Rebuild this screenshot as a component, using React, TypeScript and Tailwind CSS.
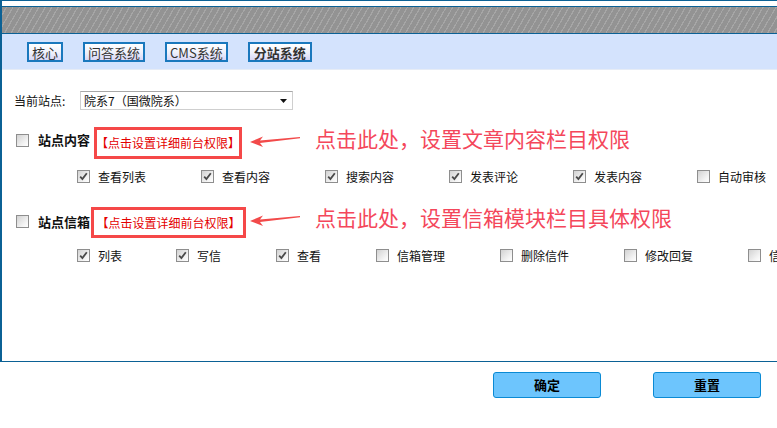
import React from "react"

/* fonts */
const cjk = "font-['Noto_Sans_CJK_SC','Noto_Sans',sans-serif]"

const tabs = [
  { label: "核心" },
  { label: "问答系统" },
  { label: "CMS系统" },
  { label: "分站系统", active: true },
]

const contentPerms = [
  { label: "查看列表", checked: true, w: "w-[124px]" },
  { label: "查看内容", checked: true, w: "w-[124px]" },
  { label: "搜索内容", checked: true, w: "w-[124px]" },
  { label: "发表评论", checked: true, w: "w-[124px]" },
  { label: "发表内容", checked: true, w: "w-[124px]" },
  { label: "自动审核", checked: false, w: "w-[124px]" },
]

const mailPerms = [
  { label: "列表", checked: true, w: "w-[99px]" },
  { label: "写信", checked: true, w: "w-[100px]" },
  { label: "查看", checked: true, w: "w-[100px]" },
  { label: "信箱管理", checked: false, w: "w-[124px]" },
  { label: "删除信件", checked: false, w: "w-[124px]" },
  { label: "修改回复", checked: false, w: "w-[124px]" },
  { label: "信件回复", checked: false, w: "w-[124px]" },
]


function Box({ checked }: { checked?: boolean }) {
  return (
    <span className="w-[13px] h-[13px] shrink-0 border border-[#8e8e8e] bg-[linear-gradient(135deg,#d2d2d2,#f4f4f4_70%,#ffffff)] flex items-center justify-center">
      {checked && (
        <svg width="9" height="9" viewBox="0 0 9 9">
          <path d="M1.2 4.6 L3.4 7 L7.8 1.2" stroke="#4a4a4a" strokeWidth="1.8" fill="none" />
        </svg>
      )}
    </span>
  )
}

function Arrow() {
  return (
    <svg width="52" height="18" viewBox="0 0 52 18" className="shrink-0">
      <polygon points="1,11 14,5.5 11,9.6 51,6 51,7.2 11,12 14,16" fill="#f24a4a" />
    </svg>
  )
}

function PermRow({ items }: { items: { label: string, checked: boolean, w: string }[] }) {
  return (
    <div className="flex flex-nowrap pl-[75px]">
      {items.map((p) => (
        <div key={p.label} className={`${p.w} shrink-0 flex items-center gap-[8px]`}>
          <Box checked={p.checked} />
          <span className="text-[12px] leading-[13px] text-[#111] whitespace-nowrap">{p.label}</span>
        </div>
      ))}
    </div>
  )
}



export default function App() {
  return (
    <div className={`w-[777px] h-[428px] overflow-hidden bg-white ${cjk}`}>
      <section className="w-[800px] h-[362px] border-l-2 border-t border-b border-[#0b6195] flex flex-col">

        {/* header */}
        <div className="pt-[5px]">
          <div className="h-[28px] border-t border-b border-[#0b6195] bg-[#939393] bg-[repeating-linear-gradient(120deg,#939393_0px,#939393_3.4px,#a6a6a6_3.4px,#a6a6a6_4.6px,#939393_4.6px,#939393_5.6px)]" />
        </div>

        {/* tabs */}
        <div className="h-[36px] bg-[#d4e3fd] border-b border-[#e6ecf6] flex items-start gap-[20px] pl-[25px] pt-[8px]">
          {tabs.map((t) => (
            <div
              key={t.label}
              className={`h-[20px] px-[3px] border-2 border-[#1a78bd] bg-[linear-gradient(#ffffff,#eef0fb_55%,#d7d6f7)] flex items-center text-[13px] leading-none text-[#333] ${t.active ? "font-bold px-[4px]" : ""}`}
            >
              {t.label}
            </div>
          ))}
        </div>

        {/* body */}
        <div className="pl-[12px] pt-[21px] flex flex-col">
          <div className="flex items-center h-[19px]">
            <span className="w-[66px] text-[12px] text-[#111]">当前站点:</span>
            <div className="w-[213px] h-[19px] border border-[#cfcfcf] border-t-[#a8a8a8] flex items-center justify-between pl-[3px] pr-[5px]">
              <span className="text-[12px] leading-none text-[#111]">院系7（国微院系）</span>
              <svg width="7" height="4" viewBox="0 0 7 4"><polygon points="0,0 7,0 3.5,4" fill="#111" /></svg>
            </div>
          </div>
        </div>

        <div className="flex flex-col mt-[17px]">
          {/* 站点内容 */}
          <div className="flex items-start h-[32px] pl-[14px]">
            <div className="mt-[7px]"><Box /></div>
            <span className="ml-[9px] mt-[6px] text-[13px] leading-[14px] font-bold text-[#111]">站点内容</span>
            <div className="ml-[4px] w-[148px] h-[32px] border-[3px] border-[#f54848] flex items-center justify-center text-[12px] text-[#e40000] whitespace-nowrap">【点击设置详细前台权限】</div>
            <div className="ml-[7px] mt-[4px]"><Arrow /></div>
            <span className="ml-[14px] -mt-[3px] text-[21px] leading-[28px] text-[#f4475b] whitespace-nowrap">点击此处，设置文章内容栏目权限</span>
          </div>

          <div className="mt-[11px]">
            <PermRow items={contentPerms} />
          </div>

          {/* 站点信箱 */}
          <div className="flex items-start h-[31px] pl-[14px] mt-[24px]">
            <div className="mt-[8px]"><Box /></div>
            <span className="ml-[9px] mt-[8px] text-[13px] leading-[14px] font-bold text-[#111]">站点信箱</span>
            <div className="ml-[1px] w-[155px] h-[31px] border-[3px] border-[#f54848] flex items-center justify-center text-[12px] text-[#e40000] whitespace-nowrap">【点击设置详细前台权限】</div>
            <div className="ml-[3px] mt-[3px]"><Arrow /></div>
            <span className="ml-[14px] -mt-[4px] text-[21px] leading-[28px] text-[#f4475b] whitespace-nowrap">点击此处，设置信箱模块栏目具体权限</span>
          </div>

          <div className="mt-[11px]">
            <PermRow items={mailPerms} />
          </div>
        </div>
      </section>

      {/* buttons */}
      <div className="flex justify-end gap-[52px] pr-[16px] mt-[10px]">
        <button className="w-[108px] h-[26px] rounded-[3px] border border-[#0a8ad4] bg-[#6dc5fd] text-[13px] font-bold text-black">确定</button>
        <button className="w-[108px] h-[26px] rounded-[3px] border border-[#0a8ad4] bg-[#6dc5fd] text-[13px] font-bold text-black">重置</button>
      </div>
    </div>
  )
}
